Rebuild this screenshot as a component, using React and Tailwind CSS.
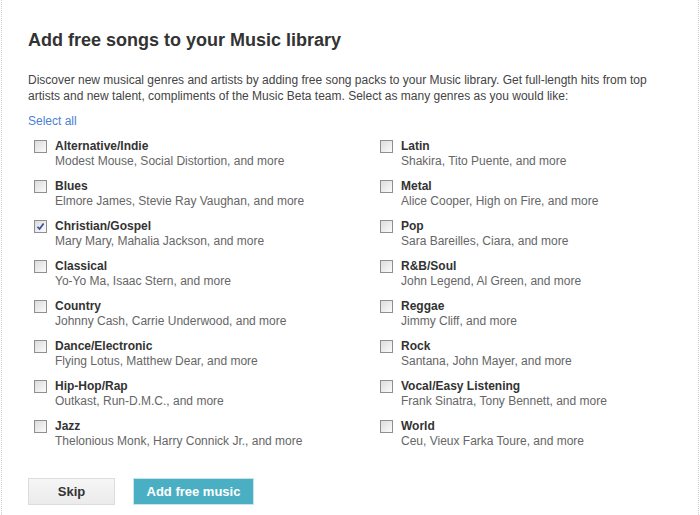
const genres = [
  ['Alternative/Indie', 'Modest Mouse, Social Distortion, and more'],
  ['Latin', 'Shakira, Tito Puente, and more'],
  ['Blues', 'Elmore James, Stevie Ray Vaughan, and more'],
  ['Metal', 'Alice Cooper, High on Fire, and more'],
  ['Christian/Gospel', 'Mary Mary, Mahalia Jackson, and more', true],
  ['Pop', 'Sara Bareilles, Ciara, and more'],
  ['Classical', 'Yo-Yo Ma, Isaac Stern, and more'],
  ['R&B/Soul', 'John Legend, Al Green, and more'],
  ['Country', 'Johnny Cash, Carrie Underwood, and more'],
  ['Reggae', 'Jimmy Cliff, and more'],
  ['Dance/Electronic', 'Flying Lotus, Matthew Dear, and more'],
  ['Rock', 'Santana, John Mayer, and more'],
  ['Hip-Hop/Rap', 'Outkast, Run-D.M.C., and more'],
  ['Vocal/Easy Listening', 'Frank Sinatra, Tony Bennett, and more'],
  ['Jazz', 'Thelonious Monk, Harry Connick Jr., and more'],
  ['World', 'Ceu, Vieux Farka Toure, and more'],
];

function Checkbox({ checked }) {
  return (
    <span className="mt-[1px] flex h-[13px] w-[13px] shrink-0 items-center justify-center border border-[#8f8f8f] bg-gradient-to-br from-[#dcdcdc] to-[#fbfbfb]">
      {checked && (
        <svg width="9" height="9" viewBox="0 0 9 9">
          <path d="M1.5 4.8 L3.6 7 L7.6 1.5" fill="none" stroke="#2a4d9c" strokeWidth="1.6" />
        </svg>
      )}
    </span>
  );
}

export default function App() {
  return (
    <div className="min-h-screen bg-white font-['Liberation_Sans',Arial,sans-serif]">
      <div className="ml-[1px] min-h-[515px] w-[698px] border-x border-dotted border-[#cfcfcf] pl-[26px]">
        <h1 className="pt-[29px] text-[18px] font-bold leading-[22px] text-[#333]">
          Add free songs to your Music library
        </h1>
        <p className="mt-[21px] w-[650px] text-[12px] leading-[16px] text-[#444]">
          Discover new musical genres and artists by adding free song packs to your Music library. Get full-length hits from top
          <br />
          artists and new talent, compliments of the Music Beta team. Select as many genres as you would like:
        </p>
        <div className="mt-[9px] text-[12px] leading-[16px] text-[#4b7fd6]">Select all</div>
        <div className="mt-[10px] grid w-[650px] grid-cols-[346px_1fr] gap-y-[10px] pl-[6px]">
          {genres.map(([name, artists, checked]) => (
            <div key={name} className="flex gap-[8px]">
              <Checkbox checked={checked} />
              <div className="text-[12px] leading-[15px]">
                <div className="font-bold text-[#333]">{name}</div>
                <div className="text-[#666]">{artists}</div>
              </div>
            </div>
          ))}
        </div>
        <div className="mt-[29px] flex gap-[18px]">
          <button className="h-[27px] w-[87px] border border-[#dcdcdc] bg-gradient-to-b from-[#f6f6f6] to-[#ebebeb] text-[13px] font-bold text-[#333]">
            Skip
          </button>
          <button className="h-[27px] w-[121px] border border-[#c8e4ea] bg-[#4aafc3] text-[13px] font-bold text-white">
            Add free music
          </button>
        </div>
      </div>
    </div>
  );
}
